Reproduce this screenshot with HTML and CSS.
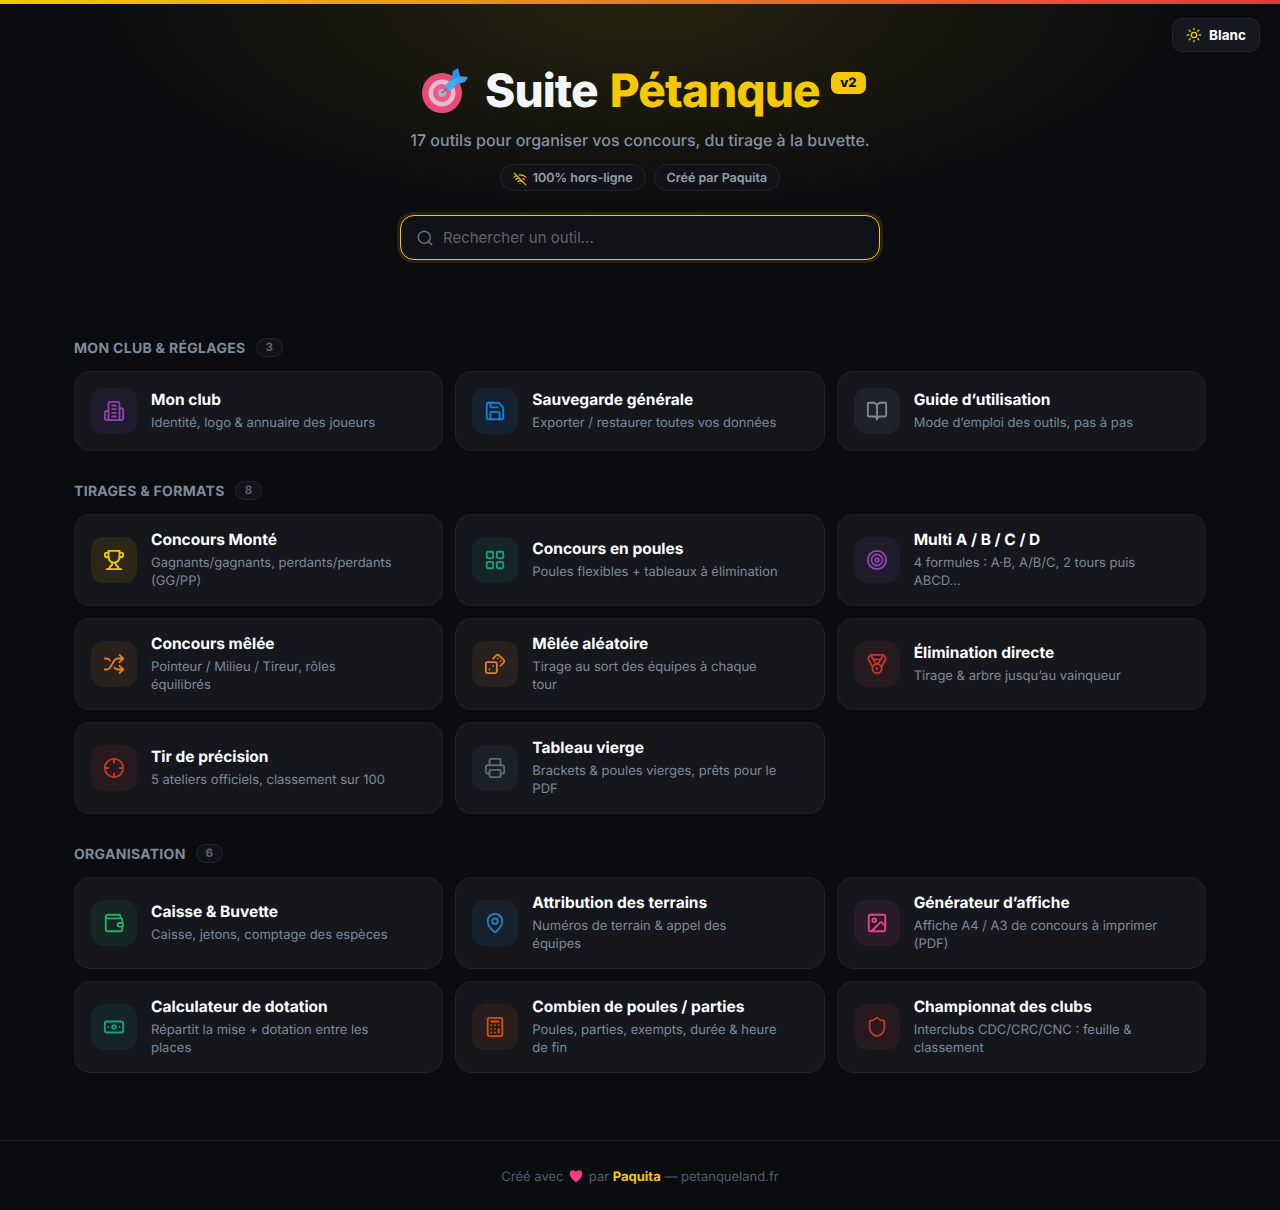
FILE: index.html
```html
<!DOCTYPE html>
<html lang="fr">
<head>
    <meta charset="UTF-8">
    <meta name="viewport" content="width=device-width, initial-scale=1.0">
    <title>Suite Pétanque</title>
    <link rel="stylesheet" href="styles.css">
</head>
<body>

    <div class="top-bar"></div>

    <button class="theme-button">
        <svg class="ico" width="16" height="16" viewBox="0 0 24 24" stroke="#f5c800"><circle cx="12" cy="12" r="4"/><path d="M12 2v2M12 20v2m-7.07-17.07 1.41 1.41m11.32 11.32 1.41 1.41M2 12h2m16 0h2M6.34 17.66l-1.41 1.41M19.07 4.93l-1.41 1.41"/></svg>
        Blanc
    </button>

    <header class="hero">
        <h1>
            <svg class="hero-emoji" width="47" height="46" viewBox="0 0 47 46">
                <circle cx="21" cy="25" r="20" fill="#ea4a78"/>
                <circle cx="21" cy="25" r="13.5" fill="#e6b9cf"/>
                <circle cx="21" cy="25" r="9" fill="#e95c88"/>
                <circle cx="21" cy="25" r="4" fill="#b8aab8"/>
                <path d="M21 25 30 16" stroke="#6b7480" stroke-width="1.6"/>
                <path d="M24 19 C27 13 32 9 38 8 C38 14 34 20 28 23 Z" fill="#45aaf2"/>
                <path d="M30 13 32 3 37 0 39 8 Z" fill="#2f8fe6"/>
                <path d="M34 17 44 14 47 9 38 8 Z" fill="#3b9df0"/>
            </svg>
            <span class="hero-white">Suite</span>
            <span class="hero-yellow">Pétanque</span>
            <span class="version">v2</span>
        </h1>
        <p class="subtitle">17 outils pour organiser vos concours, du tirage à la buvette.</p>
        <div class="pills">
            <span class="pill">
                <svg class="ico" width="14" height="14" viewBox="0 0 24 24" stroke="#f5c800"><path d="M12 20h.01"/><path d="M8.5 16.429a5 5 0 0 1 7 0"/><path d="M5 12.859a10 10 0 0 1 5.17-2.69"/><path d="M19 12.859a10 10 0 0 0-2.007-1.523"/><path d="M2 8.82a15 15 0 0 1 4.177-2.643"/><path d="M22 8.82a15 15 0 0 0-11.288-3.764"/><path d="m2 2 20 20"/></svg>
                100% hors-ligne
            </span>
            <span class="pill">Créé par Paquita</span>
        </div>
        <div class="search">
            <svg class="ico" width="18" height="18" viewBox="0 0 24 24" stroke="#667080"><circle cx="11" cy="11" r="8"/><path d="m21 21-4.3-4.3"/></svg>
            <input type="text" placeholder="Rechercher un outil...">
        </div>
    </header>

    <main class="content">

        <!-- Mon club -->
        <section class="section">
            <h2>Mon club &amp; réglages <span class="count">3</span></h2>
            <div class="grid">
                <a class="card">
                    <span class="card-icon purple"><svg class="ico" width="22" height="22" viewBox="0 0 24 24"><path d="M6 22V4a2 2 0 0 1 2-2h8a2 2 0 0 1 2 2v18Z"/><path d="M6 12H4a2 2 0 0 0-2 2v6a2 2 0 0 0 2 2h2"/><path d="M18 9h2a2 2 0 0 1 2 2v9a2 2 0 0 1-2 2h-2"/><path d="M10 6h4M10 10h4M10 14h4M10 18h4"/></svg></span>
                    <span class="card-text"><strong>Mon club</strong><small>Identité, logo &amp; annuaire des joueurs</small></span>
                </a>
                <a class="card">
                    <span class="card-icon blue"><svg class="ico" width="22" height="22" viewBox="0 0 24 24"><path d="M15.2 3a2 2 0 0 1 1.4.6l3.8 3.8a2 2 0 0 1 .6 1.4V19a2 2 0 0 1-2 2H5a2 2 0 0 1-2-2V5a2 2 0 0 1 2-2z"/><path d="M17 21v-7a1 1 0 0 0-1-1H8a1 1 0 0 0-1 1v7"/><path d="M7 3v4a1 1 0 0 0 1 1h7"/></svg></span>
                    <span class="card-text"><strong>Sauvegarde générale</strong><small>Exporter / restaurer toutes vos données</small></span>
                </a>
                <a class="card">
                    <span class="card-icon grey"><svg class="ico" width="22" height="22" viewBox="0 0 24 24"><path d="M12 7v14"/><path d="M3 18a1 1 0 0 1-1-1V4a1 1 0 0 1 1-1h5a4 4 0 0 1 4 4 4 4 0 0 1 4-4h5a1 1 0 0 1 1 1v13a1 1 0 0 1-1 1h-6a3 3 0 0 0-3 3 3 3 0 0 0-3-3z"/></svg></span>
                    <span class="card-text"><strong>Guide d’utilisation</strong><small>Mode d’emploi des outils, pas à pas</small></span>
                </a>
            </div>
        </section>

        <!-- Tirages -->
        <section class="section">
            <h2>Tirages &amp; formats <span class="count">8</span></h2>
            <div class="grid">
                <a class="card">
                    <span class="card-icon yellow"><svg class="ico" width="22" height="22" viewBox="0 0 24 24"><path d="M6 9H4.5a2.5 2.5 0 0 1 0-5H6"/><path d="M18 9h1.5a2.5 2.5 0 0 0 0-5H18"/><path d="M4 22h16"/><path d="M10 14.66V17c0 .55-.47.98-.97 1.21C7.85 18.75 7 20.24 7 22"/><path d="M14 14.66V17c0 .55.47.98.97 1.21C16.15 18.75 17 20.24 17 22"/><path d="M18 2H6v7a6 6 0 0 0 12 0V2Z"/></svg></span>
                    <span class="card-text"><strong>Concours Monté</strong><small>Gagnants/gagnants, perdants/perdants (GG/PP)</small></span>
                </a>
                <a class="card">
                    <span class="card-icon teal"><svg class="ico" width="22" height="22" viewBox="0 0 24 24"><rect x="3" y="3" width="7" height="7" rx="1"/><rect x="14" y="3" width="7" height="7" rx="1"/><rect x="14" y="14" width="7" height="7" rx="1"/><rect x="3" y="14" width="7" height="7" rx="1"/></svg></span>
                    <span class="card-text"><strong>Concours en poules</strong><small>Poules flexibles + tableaux à élimination</small></span>
                </a>
                <a class="card">
                    <span class="card-icon purple"><svg class="ico" width="22" height="22" viewBox="0 0 24 24"><circle cx="12" cy="12" r="10"/><circle cx="12" cy="12" r="6"/><circle cx="12" cy="12" r="2"/></svg></span>
                    <span class="card-text"><strong>Multi A / B / C / D</strong><small>4 formules : A·B, A/B/C, 2 tours puis ABCD...</small></span>
                </a>
                <a class="card">
                    <span class="card-icon orange"><svg class="ico" width="22" height="22" viewBox="0 0 24 24"><path d="m18 14 4 4-4 4"/><path d="m18 2 4 4-4 4"/><path d="M2 18h1.973a4 4 0 0 0 3.3-1.7l5.454-8.6a4 4 0 0 1 3.3-1.7H22"/><path d="M2 6h1.972a4 4 0 0 1 3.6 2.2"/><path d="M22 18h-6.041a4 4 0 0 1-3.3-1.8l-.359-.45"/></svg></span>
                    <span class="card-text"><strong>Concours mêlée</strong><small>Pointeur / Milieu / Tireur, rôles équilibrés</small></span>
                </a>
                <a class="card">
                    <span class="card-icon orange"><svg class="ico" width="22" height="22" viewBox="0 0 24 24"><rect x="2" y="10" width="12" height="12" rx="2" ry="2"/><path d="m17.92 14 3.5-3.5a2.24 2.24 0 0 0 0-3l-5-4.92a2.24 2.24 0 0 0-3 0L10 6"/><path d="M6 18h.01M10 14h.01M15 6h.01M18 9h.01"/></svg></span>
                    <span class="card-text"><strong>Mêlée aléatoire</strong><small>Tirage au sort des équipes à chaque tour</small></span>
                </a>
                <a class="card">
                    <span class="card-icon red"><svg class="ico" width="22" height="22" viewBox="0 0 24 24"><path d="M7.21 15 2.66 7.14a2 2 0 0 1 .13-2.2L4.4 2.8A2 2 0 0 1 6 2h12a2 2 0 0 1 1.6.8l1.6 2.14a2 2 0 0 1 .14 2.2L16.79 15"/><path d="M11 12 5.12 2.2"/><path d="m13 12 5.88-9.8"/><path d="M8 7h8"/><circle cx="12" cy="17" r="5"/><path d="M12 18v-2h-.5"/></svg></span>
                    <span class="card-text"><strong>Élimination directe</strong><small>Tirage &amp; arbre jusqu’au vainqueur</small></span>
                </a>
                <a class="card">
                    <span class="card-icon red"><svg class="ico" width="22" height="22" viewBox="0 0 24 24"><circle cx="12" cy="12" r="10"/><path d="M22 12h-4M6 12H2M12 6V2M12 22v-4"/></svg></span>
                    <span class="card-text"><strong>Tir de précision</strong><small>5 ateliers officiels, classement sur 100</small></span>
                </a>
                <a class="card">
                    <span class="card-icon slate"><svg class="ico" width="22" height="22" viewBox="0 0 24 24"><path d="M6 18H4a2 2 0 0 1-2-2v-5a2 2 0 0 1 2-2h16a2 2 0 0 1 2 2v5a2 2 0 0 1-2 2h-2"/><path d="M6 9V3a1 1 0 0 1 1-1h10a1 1 0 0 1 1 1v6"/><rect x="6" y="14" width="12" height="8" rx="1"/></svg></span>
                    <span class="card-text"><strong>Tableau vierge</strong><small>Brackets &amp; poules vierges, prêts pour le PDF</small></span>
                </a>
            </div>
        </section>

        <!-- Organisation -->
        <section class="section">
            <h2>Organisation <span class="count">6</span></h2>
            <div class="grid">
                <a class="card">
                    <span class="card-icon green"><svg class="ico" width="22" height="22" viewBox="0 0 24 24"><path d="M19 7V4a1 1 0 0 0-1-1H5a2 2 0 0 0 0 4h15a1 1 0 0 1 1 1v4h-3a2 2 0 0 0 0 4h3a1 1 0 0 0 1-1v-2a1 1 0 0 0-1-1"/><path d="M3 5v14a2 2 0 0 0 2 2h15a1 1 0 0 0 1-1v-4"/></svg></span>
                    <span class="card-text"><strong>Caisse &amp; Buvette</strong><small>Caisse, jetons, comptage des espèces</small></span>
                </a>
                <a class="card">
                    <span class="card-icon sky"><svg class="ico" width="22" height="22" viewBox="0 0 24 24"><path d="M20 10c0 4.993-5.539 10.193-7.399 11.799a1 1 0 0 1-1.202 0C9.539 20.193 4 14.993 4 10a8 8 0 0 1 16 0"/><circle cx="12" cy="10" r="3"/></svg></span>
                    <span class="card-text"><strong>Attribution des terrains</strong><small>Numéros de terrain &amp; appel des équipes</small></span>
                </a>
                <a class="card">
                    <span class="card-icon pink"><svg class="ico" width="22" height="22" viewBox="0 0 24 24"><rect x="3" y="3" width="18" height="18" rx="2" ry="2"/><circle cx="9" cy="9" r="2"/><path d="m21 15-3.086-3.086a2 2 0 0 0-2.828 0L6 21"/></svg></span>
                    <span class="card-text"><strong>Générateur d’affiche</strong><small>Affiche A4 / A3 de concours à imprimer (PDF)</small></span>
                </a>
                <a class="card">
                    <span class="card-icon teal"><svg class="ico" width="22" height="22" viewBox="0 0 24 24"><rect x="2" y="6" width="20" height="12" rx="2"/><circle cx="12" cy="12" r="2"/><path d="M6 12h.01M18 12h.01"/></svg></span>
                    <span class="card-text"><strong>Calculateur de dotation</strong><small>Répartit la mise + dotation entre les places</small></span>
                </a>
                <a class="card">
                    <span class="card-icon rust"><svg class="ico" width="22" height="22" viewBox="0 0 24 24"><rect x="4" y="2" width="16" height="20" rx="2"/><path d="M8 6h8M16 14v4M16 10h.01M12 10h.01M8 10h.01M12 14h.01M8 14h.01M12 18h.01M8 18h.01"/></svg></span>
                    <span class="card-text"><strong>Combien de poules / parties</strong><small>Poules, parties, exempts, durée &amp; heure de fin</small></span>
                </a>
                <a class="card">
                    <span class="card-icon red"><svg class="ico" width="22" height="22" viewBox="0 0 24 24"><path d="M20 13c0 5-3.5 7.5-7.66 8.95a1 1 0 0 1-.67-.01C7.5 20.5 4 18 4 13V6a1 1 0 0 1 1-1c2 0 4.5-1.2 6.24-2.72a1.17 1.17 0 0 1 1.52 0C14.51 3.81 17 5 19 5a1 1 0 0 1 1 1z"/></svg></span>
                    <span class="card-text"><strong>Championnat des clubs</strong><small>Interclubs CDC/CRC/CNC : feuille &amp; classement</small></span>
                </a>
            </div>
        </section>

    </main>

    <footer class="footer">
        <p>Créé avec <svg class="heart" width="14" height="14" viewBox="0 0 24 24"><defs><linearGradient id="heartFill" x1="0" y1="0" x2="0" y2="1"><stop offset="0" stop-color="#f0405f"/><stop offset="1" stop-color="#f83f9a"/></linearGradient></defs><path fill="url(#heartFill)" d="M12 22.5C5 17 1 13 1 8a6 6 0 0 1 11-3.2A6 6 0 0 1 23 8c0 5-4 9-11 14.5Z"/></svg> par <b>Paquita</b> — petanqueland.fr</p>
    </footer>

</body>
</html>
```

FILE: styles.css
```css
* {
    box-sizing: border-box;
}

body {
    background-color: #0a0c0f;
    background-image: radial-gradient(ellipse 560px 220px at 50% 0, rgba(245, 200, 0, 0.12), rgba(245, 200, 0, 0) 100%);
    background-repeat: no-repeat;
    color: #ffffff;
    font-family: Inter, "Liberation Sans", sans-serif;
    text-rendering: geometricPrecision;
    margin: 0;
    padding: 0;
    position: relative;
}

.top-bar {
    height: 4px;
    background: linear-gradient(90deg, #f5c800, #e67e22, #e53935);
}

.ico {
    fill: none;
    stroke-width: 2;
    stroke-linecap: round;
    stroke-linejoin: round;
    flex-shrink: 0;
}

.theme-button {
    position: absolute;
    top: 18px;
    right: 20px;
    width: 88px;
    height: 34px;
    display: flex;
    align-items: center;
    justify-content: center;
    gap: 7px;
    background-color: #16181f;
    color: #ffffff;
    border: 1px solid #23262e;
    border-radius: 10px;
    font-family: inherit;
    font-size: 13.5px;
    font-weight: 700;
}

/* Hero */
.hero {
    display: flex;
    flex-direction: column;
    align-items: center;
    padding-top: 57px;
}

.hero h1 {
    margin: 0;
    padding-left: 7px;
    height: 60px;
    display: flex;
    align-items: center;
    font-size: 46px;
    font-weight: 800;
    letter-spacing: -0.92px;
}

.hero-emoji {
    margin-right: 17px;
}

.hero-white {
    color: #f3f5f9;
    margin-right: 12px;
}

.hero-yellow {
    color: #f5c800;
}

.version {
    align-self: flex-start;
    margin: 11px 0 0 11px;
    padding: 0 9.5px;
    height: 22px;
    line-height: 22px;
    background-color: #f5c800;
    color: #0a0b0e;
    border-radius: 7px;
    font-size: 13px;
    font-weight: 800;
    letter-spacing: 0;
}

.subtitle {
    margin: 6px 0 0;
    color: #8492a3;
    font-size: 16px;
    font-weight: 500;
    line-height: 26px;
}

.pills {
    display: flex;
    gap: 8px;
    margin-top: 11px;
}

.pill {
    display: flex;
    align-items: center;
    gap: 6px;
    height: 27px;
    padding: 2px 12px 0;
    background-color: #111318;
    border: 1px solid #22252c;
    border-radius: 14px;
    color: #94a0ae;
    font-size: 12.5px;
    font-weight: 600;
}

.search {
    display: flex;
    align-items: center;
    gap: 9px;
    width: 480px;
    height: 45px;
    margin-top: 24px;
    padding: 0 15px;
    background-color: #101217;
    border: 1px solid #f5c800;
    border-radius: 14px;
    box-shadow: 0 0 0 3px rgba(245, 200, 0, 0.12);
}

.search input {
    flex: 1;
    background: none;
    border: none;
    outline: none;
    padding: 0;
    color: #ffffff;
    font-family: inherit;
    font-size: 15px;
}

.search input::placeholder {
    color: #5c6573;
    opacity: 1;
}

/* Sections */
.content {
    max-width: 1180px;
    margin: 0 auto;
    padding: 77px 24px 0;
}

.section {
    margin-bottom: 29px;
}

.section h2 {
    display: flex;
    align-items: center;
    gap: 10px;
    height: 20px;
    margin: 0 0 14px;
    padding-top: 2px;
    color: #7e8b9a;
    font-size: 14px;
    font-weight: 700;
    letter-spacing: 0.3px;
    text-transform: uppercase;
}

.count {
    height: 19px;
    margin-top: -2px;
    line-height: 17px;
    padding: 0 9px;
    border: 1px solid #23262e;
    border-radius: 10px;
    background-color: #111318;
    color: #5b6370;
    font-size: 11.5px;
    font-weight: 700;
}

.grid {
    display: grid;
    grid-template-columns: repeat(3, 1fr);
    gap: 12px;
}

.card {
    display: flex;
    align-items: center;
    gap: 14px;
    padding: 16px 46px 16px 16px;
    background-color: #15171d;
    border: 1px solid #1f2128;
    border-radius: 16px;
}

.card-icon {
    width: 46px;
    height: 46px;
    display: flex;
    align-items: center;
    justify-content: center;
    border-radius: 13px;
    flex-shrink: 0;
}

.card-text {
    flex: 1;
    display: block;
}

.card-text strong {
    display: block;
    height: 22px;
    color: #ffffff;
    font-size: 15.5px;
    font-weight: 700;
    line-height: 17px;
}

.card-text small {
    display: block;
    padding-top: 1px;
    margin-bottom: -1px;
    color: #7e8b9a;
    font-size: 13px;
    line-height: 18px;
}

.purple { background-color: rgba(142, 68, 173, 0.1); stroke: #8e44ad; }
.blue { background-color: rgba(9, 132, 227, 0.1); stroke: #0984e3; }
.grey { background-color: rgba(127, 140, 141, 0.1); stroke: #7f8c8d; }
.yellow { background-color: rgba(245, 200, 0, 0.1); stroke: #f5c800; }
.teal { background-color: rgba(22, 160, 133, 0.1); stroke: #16a085; }
.orange { background-color: rgba(230, 126, 34, 0.1); stroke: #e67e22; }
.red { background-color: rgba(192, 57, 43, 0.1); stroke: #c0392b; }
.slate { background-color: rgba(93, 109, 126, 0.1); stroke: #5d6d7e; }
.green { background-color: rgba(39, 174, 96, 0.1); stroke: #27ae60; }
.sky { background-color: rgba(41, 128, 185, 0.1); stroke: #2980b9; }
.pink { background-color: rgba(232, 67, 147, 0.1); stroke: #e84393; }
.rust { background-color: rgba(211, 84, 0, 0.1); stroke: #d35400; }

/* Footer */
.footer {
    height: 70px;
    margin-top: 67px;
    border-top: 1px solid #1c1e24;
    color: #565e6b;
    font-size: 13px;
    text-align: center;
}

.footer p {
    margin: 0;
    line-height: 72px;
}

.footer b {
    color: #f5c800;
}

.heart {
    margin: 0 2px;
    vertical-align: -2px;
}
```
